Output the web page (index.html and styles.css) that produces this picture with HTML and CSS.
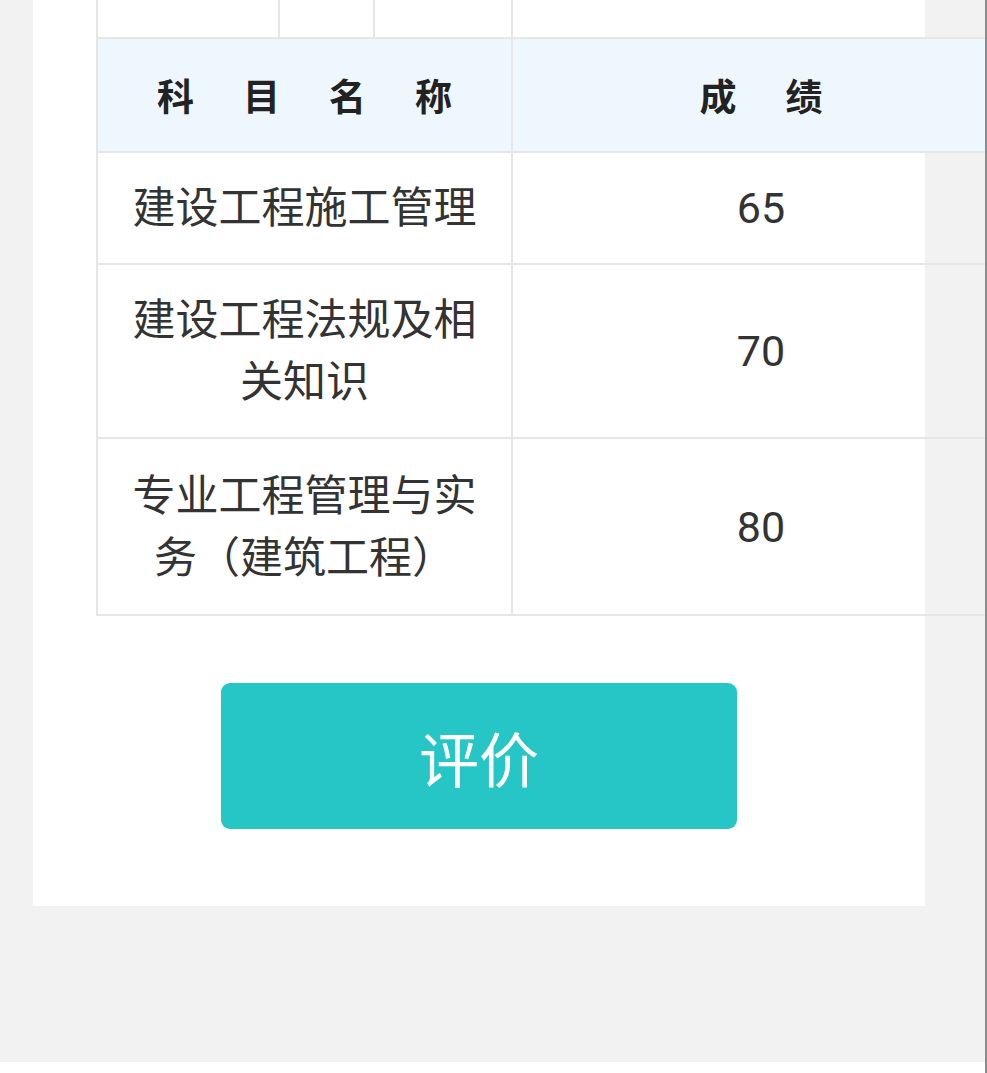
FILE: index.html
```html
<!DOCTYPE html>
<html lang="zh-CN">
<head>
<meta charset="utf-8">
<title>成绩</title>
<link rel="stylesheet" href="styles.css">
</head>
<body>
<div class="page">
  <div class="card">
    <div class="prev-row">
      <div class="prev-cell"></div>
      <div class="prev-cell"></div>
      <div class="prev-cell"></div>
      <div class="prev-cell"></div>
    </div>
    <table class="scores">
      <colgroup><col class="col-name"><col class="col-score"></colgroup>
      <thead>
        <tr><th class="th-name">科目名称</th><th class="th-score">成绩</th></tr>
      </thead>
      <tbody>
        <tr><td>建设工程施工管理</td><td>65</td></tr>
        <tr><td>建设工程法规及相关知识</td><td>70</td></tr>
        <tr class="row-tall"><td>专业工程管理与实务（建筑工程）</td><td>80</td></tr>
      </tbody>
    </table>
    <div class="actions">
      <button class="btn-rate" type="button">评价</button>
    </div>
  </div>
  <div class="bottom-bar"></div>
</div>
</body>
</html>
```

FILE: styles.css
```css
html, body {
  margin: 0;
  padding: 0;
  overflow: hidden;
}
body {
  font-family: Roboto, "Noto Sans CJK SC", "Noto Sans", sans-serif;
  background: #f2f2f2;
}
.page {
  width: 985px;
  height: 1073px;
  border-right: 2px solid #8c8c8c;
  background: #f2f2f2;
  overflow: hidden;
  display: flex;
  flex-direction: column;
}
.card {
  margin-left: 33px;
  width: 829px;
  padding: 0 0 77px 63px;
  background: #ffffff;
  overflow: visible;
}
.prev-row {
  display: grid;
  grid-template-columns: 182px 95px 138px 498px;
  width: 913px;
  height: 37px;
  box-sizing: border-box;
  border-left: 2px solid #e6e6e6;
}
.prev-cell {
  border-right: 2px solid #e6e6e6;
}
.scores {
  width: 913px;
  table-layout: fixed;
  border-collapse: collapse;
  color: #333333;
}
.col-name { width: 415px; }
.col-score { width: 498px; }
.scores th,
.scores td {
  border: 2px solid #e6e6e6;
  text-align: center;
  vertical-align: middle;
}
.scores thead tr {
  background: #eef6fe;
}
.scores th {
  font-family: "Noto Sans CJK SC", sans-serif;
  font-size: 37px;
  font-weight: 700;
  color: #222222;
  line-height: 58px;
  padding: 27px 0;
  letter-spacing: 49px;
  text-indent: 49px;
}
.scores td {
  font-size: 43px;
  line-height: 62px;
  padding: 24px 30px;
}
.scores .row-tall td {
  padding-top: 26px;
  padding-bottom: 25px;
}
.actions {
  display: flex;
  justify-content: center;
  margin-top: 67px;
  margin-left: -63px;
}
.btn-rate {
  width: 516px;
  height: 146px;
  border: none;
  border-radius: 9px;
  background: #26c6c6;
  color: #ffffff;
  font-family: "Noto Sans CJK SC", sans-serif;
  font-size: 60px;
  font-weight: 400;
  padding: 0;
  cursor: pointer;
}
.bottom-bar {
  margin-top: auto;
  height: 11px;
  background: #ffffff;
}
```
